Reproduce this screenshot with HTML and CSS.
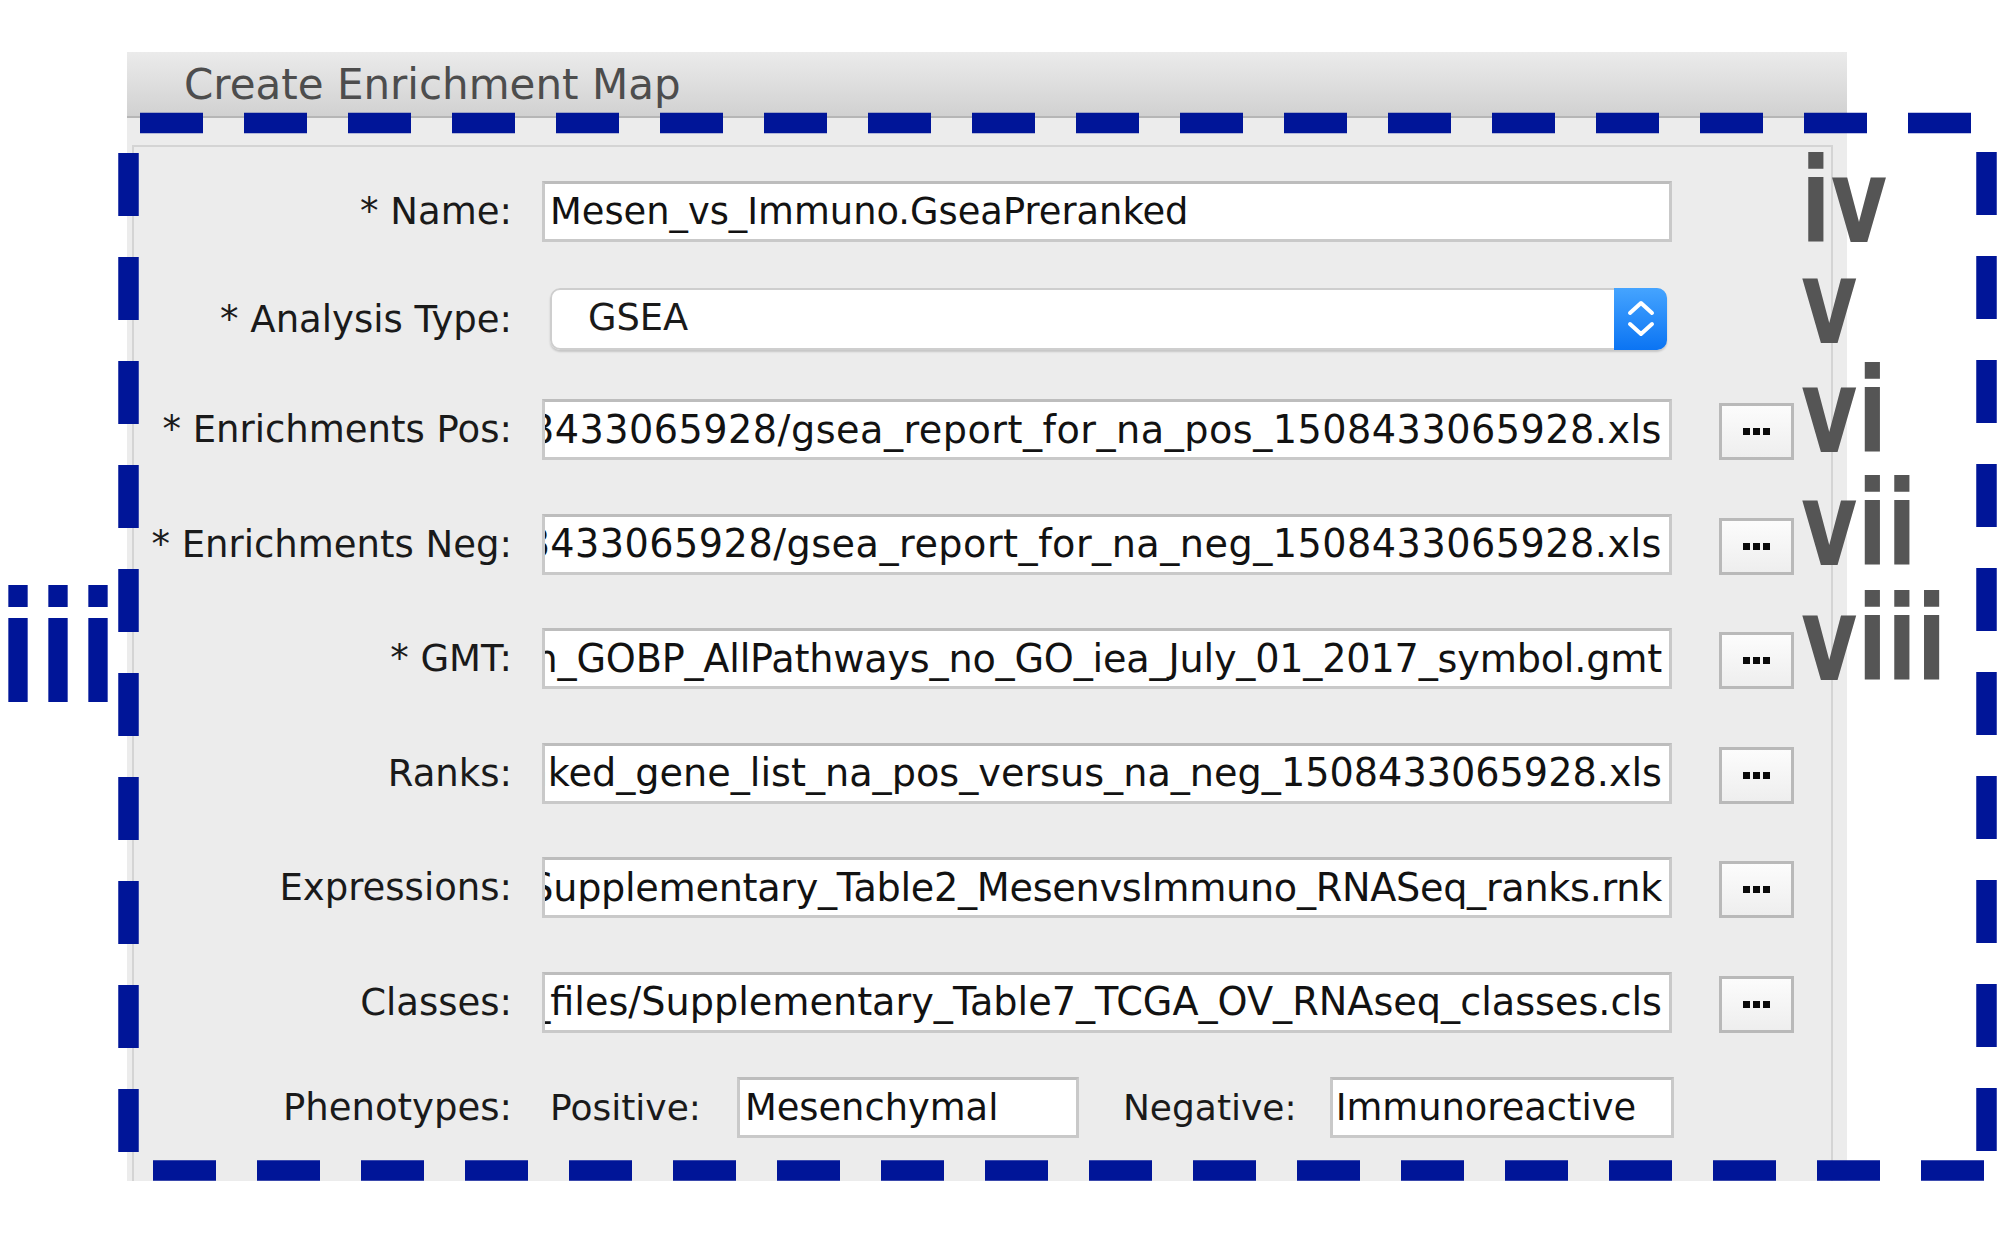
FILE: index.html
```html
<!DOCTYPE html>
<html>
<head>
<meta charset="utf-8">
<title>Create Enrichment Map</title>
<link rel="stylesheet" href="styles.css">
</head>
<body>
<div class="stage">
  <div class="window">
    <div class="titlebar"><span class="title">Create Enrichment Map</span></div>
    <div class="body">
      <div class="group">
        <div class="row row-name">
          <span class="label">* Name:</span>
          <div class="field field-plain">Mesen_vs_Immuno.GseaPreranked</div>
        </div>
        <div class="row row-combo">
          <span class="label">* Analysis Type:</span>
          <div class="combo">
            <span class="combo-text">GSEA</span>
            <span class="combo-arrows">
              <svg width="53" height="62" viewBox="0 0 53 62"><path d="M16 25 L27 15 L38 25 M16 36 L27 46 L38 36" fill="none" stroke="#fff" stroke-width="4" stroke-linecap="round" stroke-linejoin="round"/></svg>
            </span>
          </div>
        </div>
        <div class="row row-file row-first">
          <span class="label">* Enrichments Pos:</span>
          <div class="field field-path ls-wide"><span>Mesen_vs_Immuno.GseaPreranked.1508433065928/gsea_report_for_na_pos_1508433065928.xls</span></div>
          <button class="browse"><i></i><i></i><i></i></button>
        </div>
        <div class="row row-file">
          <span class="label">* Enrichments Neg:</span>
          <div class="field field-path ls-wide"><span>Mesen_vs_Immuno.GseaPreranked.1508433065928/gsea_report_for_na_neg_1508433065928.xls</span></div>
          <button class="browse"><i></i><i></i><i></i></button>
        </div>
        <div class="row row-file">
          <span class="label">* GMT:</span>
          <div class="field field-path ls-gmt"><span>EnrichmentMap_files/Human_GOBP_AllPathways_no_GO_iea_July_01_2017_symbol.gmt</span></div>
          <button class="browse"><i></i><i></i><i></i></button>
        </div>
        <div class="row row-file">
          <span class="label">Ranks:</span>
          <div class="field field-path"><span>GseaPreranked.1508433065928/ranked_gene_list_na_pos_versus_na_neg_1508433065928.xls</span></div>
          <button class="browse"><i></i><i></i><i></i></button>
        </div>
        <div class="row row-file">
          <span class="label">Expressions:</span>
          <div class="field field-path ls-expr"><span>supplementary_files/Supplementary_Table2_MesenvsImmuno_RNASeq_ranks.rnk</span></div>
          <button class="browse"><i></i><i></i><i></i></button>
        </div>
        <div class="row row-file">
          <span class="label">Classes:</span>
          <div class="field field-path"><span>supplementary_files/Supplementary_Table7_TCGA_OV_RNAseq_classes.cls</span></div>
          <button class="browse"><i></i><i></i><i></i></button>
        </div>
        <div class="row row-pheno">
          <span class="label">Phenotypes:</span>
          <span class="sublabel sub-pos">Positive:</span>
          <div class="field field-plain pheno-pos">Mesenchymal</div>
          <span class="sublabel sub-neg">Negative:</span>
          <div class="field field-plain pheno-neg">Immunoreactive</div>
        </div>
      </div>
    </div>
  </div>

  <svg class="dashes" width="2000" height="1250" viewBox="0 0 2000 1250">
    <line x1="140" y1="123" x2="1975" y2="123" />
    <line x1="153" y1="1170.5" x2="1990" y2="1170.5" />
    <line x1="128.5" y1="153" x2="128.5" y2="1160" />
    <line x1="1986.5" y1="152" x2="1986.5" y2="1160" />
  </svg>

  <div class="numerals">
    <div class="num n-iv">iv</div>
    <div class="num n-v">v</div>
    <div class="num n-vi">vi</div>
    <div class="num n-vii">vii</div>
    <div class="num n-viii">viii</div>
  </div>

  <div class="side-num">iii</div>
</div>
</body>
</html>
```

FILE: styles.css
```css
html, body {
  margin: 0;
  padding: 0;
  background: #ffffff;
}

.stage {
  position: relative;
  width: 2000px;
  height: 1250px;
  overflow: hidden;
  padding: 52px 0 0 127px;
  box-sizing: border-box;
  font-family: "DejaVu Sans", "Noto Sans", sans-serif;
}

.window {
  width: 1720px;
  height: 1129px;
  display: flex;
  flex-direction: column;
}

.titlebar {
  height: 66px;
  flex: 0 0 66px;
  box-sizing: border-box;
  background: linear-gradient(#ebebeb, #d1d1d1);
  border-bottom: 2px solid #b6b6b6;
  display: flex;
  align-items: center;
  padding: 0 0 0 57px;
}

.title {
  font-size: 42px;
  color: #4d4d4d;
  white-space: nowrap;
}

.body {
  flex: 1;
  background: #ececec;
  padding: 27px 14px 0 5px;
  display: flex;
  flex-direction: column;
}

.group {
  flex: 1;
  border: 2px solid #d4d4d4;
  border-bottom: none;
  padding-top: 34px;
  display: flex;
  flex-direction: column;
}

.row {
  display: flex;
  align-items: center;
  height: 61px;
  flex: 0 0 61px;
}

.row-combo {
  margin-top: 46px;
  height: 62px;
  flex-basis: 62px;
}

.row-file {
  margin-top: 53.5px;
}

.row-first {
  margin-top: 49px;
}

.row-pheno {
  margin-top: 44px;
}

.label {
  flex: 0 0 378px;
  text-align: right;
  font-size: 37px;
  color: #1a1a1a;
  white-space: nowrap;
}

.field {
  height: 61px;
  box-sizing: border-box;
  background: #ffffff;
  border: 3px solid #c9c9c9;
  border-top-color: #bdbdbd;
  color: #121212;
  white-space: nowrap;
  overflow: hidden;
  display: flex;
  align-items: center;
}

.field-plain {
  margin-left: 30px;
  width: 1130px;
  padding-left: 5px;
  font-size: 36.8px;
}

.field-path {
  margin-left: 30px;
  width: 1130px;
  flex: 0 0 1130px;
  justify-content: flex-end;
  padding-right: 7px;
  font-size: 38.2px;
}

.field-path span {
  flex: 0 0 auto;
}

.ls-wide {
  letter-spacing: 0.48px;
}

.ls-gmt {
  letter-spacing: -0.2px;
}

.ls-expr {
  letter-spacing: -0.3px;
}

.browse {
  margin-left: 47px;
  align-self: flex-end;
  width: 75px;
  height: 57px;
  box-sizing: border-box;
  border: 3px solid #b9b9b9;
  background: linear-gradient(#fcfcfc, #eeeeee);
  padding: 0;
  display: flex;
  align-items: center;
  justify-content: center;
  gap: 3px;
}

.browse i {
  display: block;
  width: 7px;
  height: 7px;
  background: #0a0a0a;
}

.combo {
  margin-left: 38px;
  width: 1117px;
  height: 62px;
  box-sizing: border-box;
  border-radius: 10px;
  background: #ffffff;
  box-shadow: inset 0 0 0 2px #cecece, 0 2px 2px rgba(0, 0, 0, 0.16);
  overflow: hidden;
  display: flex;
  align-items: stretch;
}

.combo-text {
  flex: 1;
  display: flex;
  align-items: center;
  padding-left: 38px;
  padding-bottom: 3px;
  font-size: 36.8px;
  color: #1a1a1a;
}

.combo-arrows {
  flex: 0 0 53px;
  background: linear-gradient(#45a4ff, #0b74f3);
  display: flex;
}

.sublabel {
  font-size: 36px;
  color: #1a1a1a;
  white-space: nowrap;
}

.sub-pos {
  margin-left: 38px;
}

.pheno-pos {
  margin-left: 36px;
  width: 342px;
}

.sub-neg {
  margin-left: 44px;
}

.pheno-neg {
  margin-left: 33px;
  width: 344px;
  padding-left: 3px;
}

/* annotation overlay */
.dashes {
  position: absolute;
  left: 0;
  top: 0;
  pointer-events: none;
}

.dashes line {
  stroke: #001598;
  stroke-width: 20.5;
  stroke-dasharray: 63 41;
}

.numerals {
  position: absolute;
  left: 1801px;
  top: 151.5px;
  font-family: "DejaVu Sans", sans-serif;
  font-weight: bold;
  font-size: 117px;
  line-height: 100px;
  color: #555555;
}

.num {
  height: 100px;
  transform: scaleX(0.74);
  transform-origin: left center;
  white-space: nowrap;
}

.n-v { margin-top: 1px; }
.n-vi { margin-top: 9px; }
.n-vii { margin-top: 13px; }
.n-viii { margin-top: 15px; }

.side-num {
  position: absolute;
  left: -1px;
  top: 572px;
  font-family: "DejaVu Sans", sans-serif;
  font-weight: bold;
  font-size: 154px;
  line-height: 154px;
  letter-spacing: 2.8px;
  color: #001598;
  transform: scaleX(0.72);
  transform-origin: left center;
  white-space: nowrap;
}
```
